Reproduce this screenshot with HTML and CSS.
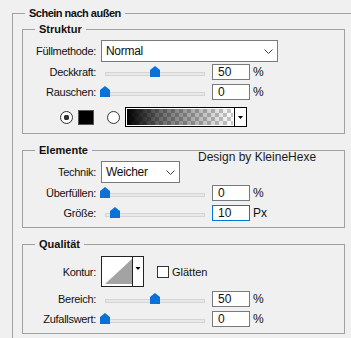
FILE: index.html
```html
<!DOCTYPE html>
<html lang="de">
  <head>
    <meta charset="UTF-8" />
    <title>Schein nach außen</title>
    <link rel="stylesheet" href="styles.css">
  </head>
  <body>
    <fieldset class="group">
      <legend>Schein nach außen</legend>

      <!-- Struktur -->
      <fieldset class="box">
        <legend>Struktur</legend>
        <div class="row tall">
          <span class="label">Füllmethode:</span>
          <div class="select wide">
            <span>Normal</span>
            <svg width="9" height="5" viewBox="0 0 9 5"><polyline points="0.5,0.5 4.5,4.5 8.5,0.5" fill="none" stroke="#444" /></svg>
          </div>
        </div>
        <div class="row first">
          <span class="label">Deckkraft:</span>
          <div class="slider">
            <div class="track"></div>
            <svg class="thumb" style="left: 49px" width="10" height="11" viewBox="0 0 10 11"><polygon points="0,4 5,0 10,4 10,11 0,11" /></svg>
          </div>
          <div class="num">50</div>
          <span class="unit">%</span>
        </div>
        <div class="row">
          <span class="label">Rauschen:</span>
          <div class="slider">
            <div class="track"></div>
            <svg class="thumb" style="left: -1px" width="10" height="11" viewBox="0 0 10 11"><polygon points="0,4 5,0 10,4 10,11 0,11" /></svg>
          </div>
          <div class="num">0</div>
          <span class="unit">%</span>
        </div>
        <div class="row colors">
          <span class="radio checked"></span>
          <span class="swatch"></span>
          <span class="radio second"></span>
          <div class="gradient">
            <div class="ramp"></div>
            <div class="drop">
              <svg width="5" height="3" viewBox="0 0 5 3"><polygon points="0,0 5,0 2.5,3" /></svg>
            </div>
          </div>
        </div>
      </fieldset>

      <!-- Elemente -->
      <fieldset class="box spaced">
        <legend>Elemente</legend>
        <div class="row tall">
          <span class="label">Technik:</span>
          <div class="select narrow">
            <span>Weicher</span>
            <svg width="9" height="5" viewBox="0 0 9 5"><polyline points="0.5,0.5 4.5,4.5 8.5,0.5" fill="none" stroke="#444" /></svg>
          </div>
          <span class="credit">Design by KleineHexe</span>
        </div>
        <div class="row first">
          <span class="label">Überfüllen:</span>
          <div class="slider">
            <div class="track"></div>
            <svg class="thumb" style="left: -1px" width="10" height="11" viewBox="0 0 10 11"><polygon points="0,4 5,0 10,4 10,11 0,11" /></svg>
          </div>
          <div class="num">0</div>
          <span class="unit">%</span>
        </div>
        <div class="row">
          <span class="label">Größe:</span>
          <div class="slider">
            <div class="track"></div>
            <svg class="thumb" style="left: 9px" width="10" height="11" viewBox="0 0 10 11"><polygon points="0,4 5,0 10,4 10,11 0,11" /></svg>
          </div>
          <div class="num focus">10</div>
          <span class="unit">Px</span>
        </div>
      </fieldset>

      <!-- Qualität -->
      <fieldset class="box spaced quality">
        <legend>Qualität</legend>
        <div class="row contour">
          <span class="label">Kontur:</span>
          <svg class="curve" width="43" height="31" viewBox="0 0 43 31">
            <rect x="0.5" y="0.5" width="42" height="30" fill="#fff" stroke="#222" />
            <polygon points="4,28 31,3 31,28" fill="#a3a3a3" />
            <line x1="31.5" y1="0" x2="31.5" y2="31" stroke="#222" />
            <polygon points="34.5,11 39.5,11 37,14" fill="#000" />
          </svg>
          <span class="check"></span>
          <span>Glätten</span>
        </div>
        <div class="row">
          <span class="label">Bereich:</span>
          <div class="slider">
            <div class="track"></div>
            <svg class="thumb" style="left: 49px" width="10" height="11" viewBox="0 0 10 11"><polygon points="0,4 5,0 10,4 10,11 0,11" /></svg>
          </div>
          <div class="num">50</div>
          <span class="unit">%</span>
        </div>
        <div class="row">
          <span class="label">Zufallswert:</span>
          <div class="slider">
            <div class="track"></div>
            <svg class="thumb" style="left: -1px" width="10" height="11" viewBox="0 0 10 11"><polygon points="0,4 5,0 10,4 10,11 0,11" /></svg>
          </div>
          <div class="num">0</div>
          <span class="unit">%</span>
        </div>
      </fieldset>
    </fieldset>
  </body>
</html>
```

FILE: styles.css
```css
* {
  box-sizing: border-box;
}

body {
  margin: 0;
  padding-top: 7px;
  background: #f0f0f0;
  font-family: "Liberation Sans", Arial, sans-serif;
  font-size: 11px;
  color: #111;
  overflow: hidden;
}

.group {
  margin: 0 0 0 12px;
  padding: 3px 0 30px 9px;
  width: 360px;
  min-width: 0;
  border: 1px solid #a0a0a0;
  border-right: none;
}

.group > legend {
  margin-left: 3px;
  padding: 0 4px;
  font-weight: bold;
  line-height: 13px;
  letter-spacing: -0.5px;
}

.box {
  margin: 0;
  padding: 4px 0 6px 0;
  width: 323px;
  min-width: 0;
  border: 1px solid #a0a0a0;
}

.box legend {
  margin-left: 12px;
  padding: 0 4px;
  font-weight: bold;
  line-height: 13px;
}

.spaced {
  margin-top: 10px;
}

.quality {
  padding-top: 5px;
}

.row {
  display: flex;
  align-items: center;
  height: 16px;
  margin-top: 4px;
}

.row.tall {
  height: 22px;
  margin-top: 0;
}

.row.first {
  margin-top: 2px;
}

.label {
  width: 73px;
  margin-right: 5px;
  text-align: right;
  letter-spacing: -0.3px;
  white-space: nowrap;
}

.select {
  display: flex;
  align-items: center;
  justify-content: space-between;
  height: 22px;
  padding: 0 4px 0 4px;
  background: #fff;
  border: 1px solid #7a7a7a;
  font-size: 12px;
  letter-spacing: -0.3px;
}

.select.wide {
  width: 177px;
}

.select.narrow {
  width: 79px;
}

.credit {
  align-self: flex-start;
  margin: -11px 0 0 18px;
  font-size: 12px;
  line-height: 14px;
  color: #1a1a1a;
}

.slider {
  position: relative;
  width: 108px;
  height: 16px;
}

.track {
  position: absolute;
  left: 4px;
  right: 4px;
  top: 8px;
  height: 4px;
  background: #e8e8e8;
  border: 1px solid #d4d4d4;
}

.thumb {
  position: absolute;
  top: 2px;
  fill: #0a72d6;
}

.num {
  width: 38px;
  height: 16px;
  margin-left: 3px;
  padding-left: 5px;
  line-height: 14px;
  background: #fff;
  border: 1px solid #7a7a7a;
  font-size: 12px;
}

.num.focus {
  border-color: #0078d7;
}

.unit {
  margin-left: 3px;
  font-size: 12px;
}

.colors {
  height: 20px;
  margin-top: 7px;
  padding-left: 37px;
}

.radio {
  width: 13px;
  height: 13px;
  border: 1px solid #333;
  border-radius: 50%;
  background: #fff;
}

.radio.checked {
  background: radial-gradient(circle, #333 0 2.6px, #fff 3px);
}

.radio.second {
  margin-left: 13px;
}

.swatch {
  width: 16px;
  height: 15px;
  margin-left: 5px;
  background: #000;
  border: 1px solid #555;
}

.gradient {
  display: flex;
  width: 122px;
  height: 20px;
  margin-left: 5px;
  border: 1px solid #000;
  background: #fff;
}

.ramp {
  flex: 1;
  margin: 1px;
  background:
    linear-gradient(to right, #000, rgba(0, 0, 0, 0.6) 30%, rgba(0, 0, 0, 0)),
    repeating-conic-gradient(#c8c8c8 0 25%, #fff 0 50%) 0 0 / 8px 8px;
}

.drop {
  display: flex;
  align-items: center;
  justify-content: center;
  width: 12px;
  border-left: 1px solid #000;
}

.contour {
  height: 31px;
  margin-top: 0;
}

.check {
  width: 12px;
  height: 12px;
  margin: 0 3px 0 13px;
  background: #fff;
  border: 1px solid #333;
}
```
